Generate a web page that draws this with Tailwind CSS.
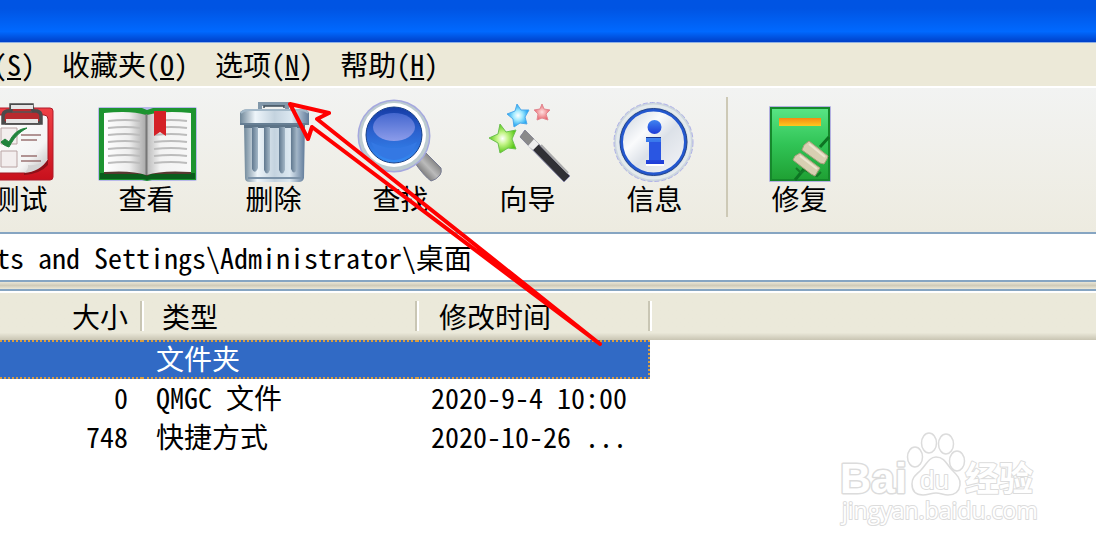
<!DOCTYPE html>
<html lang="zh-CN">
<head>
  <meta charset="UTF-8" />
  <meta name="viewport" content="width=device-width, initial-scale=1.0" />
  <title>WinRAR</title>
  <script src="https://cdn.jsdelivr.net/npm/@tailwindcss/browser@4"></script>
</head>
<body class="relative min-h-screen overflow-hidden bg-white text-black text-[28px] leading-7 font-['Noto_Sans_CJK_SC',sans-serif] [font-feature-settings:'hwid']">

  <!-- Title bar -->
  <header class="h-[43px] border-b border-[#8fb0e4] bg-linear-to-b from-[#0054e3] from-20% via-[#0069ff] via-75% to-[#0040c8]"></header>

  <!-- Menu -->
  <nav class="-ml-[7px] flex h-[43px] items-center gap-[27px] bg-[#ece9d8] pb-0.5 whitespace-nowrap">
    <button type="button">(<u class="underline-offset-2">S</u>)</button>
    <button type="button">收藏夹(<u class="underline-offset-2">O</u>)</button>
    <button type="button">选项(<u class="underline-offset-2">N</u>)</button>
    <button type="button">帮助(<u class="underline-offset-2">H</u>)</button>
  </nav>

  <!-- Toolbar -->
  <div class="flex h-[146px] items-start border-t-2 border-white bg-linear-to-b from-[#f2f3f2] to-[#edebe0] pt-2">
    <button type="button" class="-ml-[44px] flex w-[127px] shrink-0 flex-col items-center">
      <svg class="h-[88px] w-full" viewBox="-44 96 127 88" fill="none">
        <defs>
          <linearGradient id="red" x1="0" y1="0" x2="0" y2="1"><stop stop-color="#f04045"/><stop offset="1" stop-color="#c8101c"/></linearGradient>
          <linearGradient id="paper" x1="0" y1="0" x2="1" y2="1"><stop stop-color="#fff"/><stop offset=".7" stop-color="#f4f4f4"/><stop offset="1" stop-color="#bbb"/></linearGradient>
        </defs>
        <rect x="-13" y="108" width="66" height="72" rx="3" fill="url(#red)" stroke="#b01a2a"/>
        <path d="M-6 115h50q4 0 4 4v41q-9 12-24 13H-6z" fill="url(#paper)" stroke="#a31722"/>
        <path d="M24 173q16-2 24-13v5q-8 9-24 10z" fill="#8d1118"/>
        <path d="M24 173q5-4 4-8 12 1 20-6-8 13-24 14z" fill="#d4d4d4"/>
        <path d="M1 128h16v16H1zM1 151h16v16H1z" fill="#f3eeee" stroke="#b9a3a3"/>
        <path d="M21 135h20M21 140h16M21 161h20M21 156h16" stroke="#9a7373" stroke-width="1.5"/>
        <path d="M1 142l4-3 4 3c4-8 9-13 18-14-9 5-13 10-18 19-3-1-6-2-8-5z" fill="#21843d" stroke="#21843d"/>
        <path d="M8 109h27l5 7v7H3v-7z" fill="#b82a2e"/>
        <path d="M11 106v-1h21v1l1 5h4q4 1 4 5v7H3v-7q0-4 4-5h4z" stroke="#4b4b4b" stroke-width="3.5"/>
        <path d="M6 121h32M11 107h22" stroke="#e6e6e6" stroke-width="4"/>
        <path d="M5 124h35M12 112h20" stroke="#555" stroke-width="1.5"/>
      </svg>
      测试
    </button>
    <button type="button" class="flex w-[127px] shrink-0 flex-col items-center">
      <svg class="h-[88px] w-full" viewBox="83 96 127 88" fill="none">
        <defs>
          <linearGradient id="pageL"><stop stop-color="#fff"/><stop offset=".6" stop-color="#eee"/><stop offset="1" stop-color="#aaa"/></linearGradient>
          <linearGradient id="pageR"><stop stop-color="#bbb"/><stop offset=".3" stop-color="#f3f3f3"/><stop offset="1" stop-color="#f8f8f8"/></linearGradient>
        </defs>
        <rect x="98" y="107" width="99" height="74" rx="2" fill="#b9b9ea"/>
        <path d="M99 108h43l5 2 6-2h43v72h-44l-5 1-5-1H99z" fill="#1d9430"/>
        <path d="M100 173h95v6h-44l-4 1-4-1h-43z" fill="#0b5d1c"/>
        <path d="M104 171h87v3h-40l-4 2-4-2h-39z" fill="#56382f"/>
        <path d="M104 113q27-3 42 2v60q-14-5-42-3z" fill="url(#pageL)"/>
        <path d="M191 113q-27-3-44 2v60q14-5 44-3z" fill="url(#pageR)"/>
        <path d="M108 121q18-2 32 0M108 128q18-2 32 0M108 135q18-2 32 0M108 142q18-2 32 0M108 149q18-2 32 0M108 156q18-2 32 0M108 163q18-2 32 0M154 121q18-2 33 0M154 128q18-2 33 0M154 135q18-2 33 0M154 142q18-2 33 0M154 149q18-2 33 0M154 156q18-2 33 0M154 163q18-2 33 0" stroke="#bcbcbc" stroke-width="2"/>
        <path d="M146.500 114v61" stroke="#777" stroke-width="2"/>
        <path d="M154 111h12v25l-6-4-6 4z" fill="#d42127"/>
      </svg>
      查看
    </button>
    <button type="button" class="flex w-[127px] shrink-0 flex-col items-center">
      <svg class="h-[88px] w-full" viewBox="210 96 127 88" fill="none">
        <defs>
          <linearGradient id="steel"><stop stop-color="#6f8799"/><stop offset=".22" stop-color="#eef5fa"/><stop offset=".5" stop-color="#c4d3df"/><stop offset=".75" stop-color="#dce8f1"/><stop offset="1" stop-color="#5f7a99"/></linearGradient>
          <linearGradient id="slot"><stop stop-color="#60788f"/><stop offset="1" stop-color="#a5b8c8"/></linearGradient>
        </defs>
        <path d="M260 110v-6h27v6" stroke="#8298aa" stroke-width="4"/>
        <path d="M264 108v-2h20v2" stroke="#3d4c59" stroke-width="1.5"/>
        <path d="M244 123h61l-1 55q-1 4-5 4h-49q-5 0-5-4z" fill="url(#steel)"/>
        <path d="M244 124h61v4h-61z" fill="#5d7488"/>
        <g fill="url(#slot)">
          <path d="M252 127h6v41q-3 7-6 1z"/><path d="M264 127h6v43q-3 7-6 0z"/><path d="M279 127h6v43q-3 7-6 0z"/><path d="M291 127h6v42q-3 7-6 0z"/>
        </g>
        <path d="M248 178h53" stroke="#7c93a9" stroke-width="2"/>
        <path d="M240 113q2-4 8-4h53q7 0 8 4v12h-69z" fill="url(#steel)"/>
        <path d="M241 113q3-3 9-3h50q6 0 8 3" stroke="#a4b9c9" stroke-width="2"/>
        <path d="M240 124h69" stroke="#667e93" stroke-width="2"/>
      </svg>
      删除
    </button>
    <button type="button" class="flex w-[127px] shrink-0 flex-col items-center">
      <svg class="h-[88px] w-full" viewBox="337 96 127 88" fill="none">
        <defs>
          <linearGradient id="lens" x1="0" y1="0" x2="0" y2="1"><stop stop-color="#153ba5"/><stop offset=".45" stop-color="#2b62cf"/><stop offset="1" stop-color="#348bf3"/></linearGradient>
          <linearGradient id="gloss" x1="0" y1="0" x2="0" y2="1"><stop stop-color="#4467cf"/><stop offset="1" stop-color="#8c9cea"/></linearGradient>
          <linearGradient id="handle" x1="0" y1="1" x2="1" y2="0"><stop stop-color="#333"/><stop offset=".5" stop-color="#bbb"/><stop offset="1" stop-color="#444"/></linearGradient>
        </defs>
        <path d="M415 163l11-10 15 15q1 4-1 7-4 5-9 6-7-5-16-18z" fill="url(#handle)" stroke="#777b91"/>
        <circle cx="394" cy="136" r="36.500" fill="#a5a8df"/>
        <circle cx="394" cy="136" r="35" fill="#bccbd0"/>
        <circle cx="394" cy="135" r="32" fill="#fff"/>
        <circle cx="394" cy="135" r="28" fill="url(#lens)" stroke="#174088"/>
        <ellipse cx="394" cy="127" rx="21" ry="14" fill="url(#gloss)"/>
        <path d="M371 142q23 12 46 0-6 17-23 18-17-1-23-18z" fill="#3478e3"/>
      </svg>
      查找
    </button>
    <button type="button" class="flex w-[127px] shrink-0 flex-col items-center">
      <svg class="h-[88px] w-full" viewBox="464 96 127 88" fill="none">
        <defs>
          <radialGradient id="green"><stop stop-color="#fff"/><stop offset=".4" stop-color="#c5f58a"/><stop offset="1" stop-color="#58c814"/></radialGradient>
          <radialGradient id="cyan"><stop stop-color="#fff"/><stop offset=".4" stop-color="#a5ebff"/><stop offset="1" stop-color="#149ff0"/></radialGradient>
          <radialGradient id="pink"><stop stop-color="#ffe0e0"/><stop offset="1" stop-color="#e8686e"/></radialGradient>
        </defs>
        <path d="M500 124l6 8 10-2-4 9 4 10-8-1-8 5-2-10-9-5 9-4z" fill="url(#green)" stroke="#6cc04f"/>
        <path d="M517 104l4 6 8 0-4 7 2 7-7-1-6 4-1-8-6-5 8-3z" fill="url(#cyan)" stroke="#4fa9ea"/>
        <path d="M542 104l2 5 6 1-4 4 2 6-6-2-5 2 1-6-4-4 6-1z" fill="url(#pink)" stroke="#e28790"/>
        <path d="M525 130l45 46-6 6-44-45z" fill="#303035" stroke="#8989a8"/>
        <path d="M525 130l14 14-6 6-13-13z" fill="#8a8a8a"/>
        <path d="M534 139l5 5-6 6-5-4z" fill="#eee"/>
        <path d="M541 145l27 28" stroke="#aaa" stroke-width="2"/>
      </svg>
      向导
    </button>
    <button type="button" class="flex w-[127px] shrink-0 flex-col items-center">
      <svg class="h-[88px] w-full" viewBox="591 96 127 88" fill="none">
        <defs>
          <linearGradient id="disc" x1="0" y1="0" x2="1" y2="1"><stop stop-color="#c9d1db"/><stop offset=".35" stop-color="#fafbfc"/><stop offset=".55" stop-color="#dce1e8"/><stop offset="1" stop-color="#f5f6f8"/></linearGradient>
          <linearGradient id="info" x1="0" y1="0" x2="0" y2="1"><stop stop-color="#3f84f0"/><stop offset="1" stop-color="#1f3cd8"/></linearGradient>
        </defs>
        <circle cx="653.500" cy="142" r="39.500" fill="#cdd7de" stroke="#aeb0e8" stroke-dasharray="5 2"/>
        <circle cx="653.500" cy="142" r="36" stroke="#e4eaed" stroke-width="3"/>
        <circle cx="653.500" cy="142" r="32" fill="url(#disc)" stroke="#2458cf" stroke-width="3"/>
        <circle cx="653.500" cy="142" r="33.500" stroke="#24448a"/>
        <circle cx="654.500" cy="127" r="7" fill="url(#info)"/>
        <path d="M646 137h15v23h3v4h-18v-4h3v-18h-3z" fill="url(#info)"/>
        <path d="M649 142h12v18h-12z" fill="#2a56e2"/>
        <path d="M646 137.500h15" stroke="#1b3590"/>
        <path d="M646 165h18" stroke="#fff" stroke-width="2"/>
      </svg>
      信息
    </button>
    <div class="mx-2 mt-px h-[120px] w-[2px] shrink-0 bg-[#cdc9b6]"></div>
    <button type="button" class="flex w-[127px] shrink-0 flex-col items-center">
      <svg class="h-[88px] w-full" viewBox="736 96 127 88" fill="none">
        <defs>
          <linearGradient id="cover" x1="0" y1="0" x2="0" y2="1"><stop stop-color="#59e584"/><stop offset=".5" stop-color="#31c456"/><stop offset="1" stop-color="#1fa033"/></linearGradient>
          <linearGradient id="orange" x1="0" y1="0" x2="0" y2="1"><stop stop-color="#f58a10"/><stop offset="1" stop-color="#ffc81e"/></linearGradient>
        </defs>
        <rect x="769" y="106" width="62" height="76" rx="1" fill="#b3b0e0"/>
        <rect x="771" y="108" width="58" height="72" fill="url(#cover)" stroke="#15882b" stroke-width="2"/>
        <rect x="779" y="118" width="42" height="8" fill="url(#orange)"/>
        <path d="M829 137l-9 10M804 169l-9 11" stroke="#0d7423" stroke-width="3"/>
        <path d="M796 168l5 5 4-3 12 6 4-4" stroke="#157a28" stroke-width="2"/>
        <path d="M809 141l19 15-1 3-3 5-4-1-18-13 2-5z" fill="#d8cfb2" stroke="#a89f7a"/>
        <path d="M800 153l20 15-2 3-3 5-4-2-18-14 2-4z" fill="#d8cfb2" stroke="#a89f7a"/>
        <path d="M809 144l16 13M800 156l17 13" stroke="#ece5cf" stroke-width="2"/>
      </svg>
      修复
    </button>
  </div>

  <!-- Address bar -->
  <div class="h-[50px] border-y-2 border-[#86a5c2] bg-white">
    <label class="sr-only" for="path">地址</label>
    <input id="path" type="text" value="ts and Settings\Administrator\桌面"
           class="-ml-1 block h-full w-full pb-px [font-feature-settings:'hwid'] focus:outline-none">
  </div>
  <div class="h-[7px] bg-linear-to-b from-[#e9e6d6] via-[#cfcbb9] to-[#ece9d8]"></div>

  <!-- File list -->
  <main class="border-t-2 border-[#86a5c2]">
    <table class="w-full table-fixed border-separate border-spacing-0 text-left whitespace-nowrap">
      <colgroup>
        <col class="w-[142px]"><col class="w-[275px]"><col class="w-[233px]"><col>
      </colgroup>
      <thead class="bg-linear-to-b from-[#ebe9da] from-85% to-[#c9c5b3]">
        <tr class="h-[49px]">
          <th class="border-t-2 border-white p-0 pb-0.5 font-normal"><div class="flex h-[30px] items-center justify-end border-r-2 border-[#c9c6b4] pr-3 shadow-[2px_0_0_#fff]">大小</div></th>
          <th class="border-t-2 border-white p-0 pb-0.5 font-normal"><div class="flex h-[30px] items-center border-r-2 border-[#c9c6b4] pl-5 shadow-[2px_0_0_#fff]">类型</div></th>
          <th class="border-t-2 border-white p-0 pb-0.5 font-normal"><div class="flex h-[30px] items-center border-r-2 border-[#c9c6b4] pl-[22px] shadow-[2px_0_0_#fff]">修改时间</div></th>
          <td class="border-t-2 border-white p-0"></td>
        </tr>
      </thead>
      <tbody>
        <tr class="h-[39px] text-white">
          <td class="border-y-2 border-dotted border-[#d99d3f] bg-[#316ac5] p-0"></td>
          <td class="border-y-2 border-dotted border-[#d99d3f] bg-[#316ac5] pt-0 pb-1 pl-[14px]">文件夹</td>
          <td class="border-y-2 border-r-2 border-dotted border-[#d99d3f] bg-[#316ac5] p-0"></td>
        </tr>
        <tr class="h-[39px]">
          <td class="pt-0 pr-[14px] pb-1 text-right">0</td>
          <td class="pt-0 pb-1 pl-[14px]">QMGC 文件</td>
          <td class="pt-0 pb-1 pl-[14px]">2020-9-4 10:00</td>
        </tr>
        <tr class="h-[39px]">
          <td class="pt-0 pr-[14px] pb-1 text-right">748</td>
          <td class="pt-0 pb-1 pl-[14px]">快捷方式</td>
          <td class="pt-0 pb-1 pl-[14px]">2020-10-26 ...</td>
        </tr>
      </tbody>
    </table>
  </main>

  <!-- Pointer arrow -->
  <svg class="pointer-events-none absolute top-[100px] left-[286px] h-[250px] w-[320px]" viewBox="286 100 320 250" fill="none">
    <path d="M600 344L317 119l12-6-39-9 18 35 4-12z" stroke="#f00" stroke-width="4" stroke-linejoin="round"/>
  </svg>

  <!-- Watermark -->
  <svg class="pointer-events-none absolute top-[428px] left-[836px] h-[100px] w-[206px]" viewBox="836 428 206 100" fill="#fff" stroke="#dcdcdc" stroke-width="2" stroke-linejoin="round">
    <g stroke-width="1.5">
      <ellipse cx="915" cy="457" rx="7.500" ry="10"/>
      <ellipse cx="929" cy="443" rx="7.500" ry="10"/>
      <ellipse cx="946" cy="444" rx="7.500" ry="10"/>
      <ellipse cx="957" cy="461" rx="7.500" ry="10"/>
      <path d="M936 457c9 0 11 8 16 13s9 9 8 15c-1 8-6 10-12 10-5 0-7-2-12-2s-8 2-13 2c-7 0-11-4-11-11s4-9 9-14 8-13 15-13z"/>
    </g>
    <g style="paint-order: stroke">
      <text x="840" y="493" font-family="Liberation Sans" font-weight="700" font-size="43" stroke-width="3">Bai</text>
      <text x="920" y="489" font-family="Liberation Sans" font-size="26">du</text>
      <text x="965" y="491" font-family="Noto Sans CJK SC" font-weight="700" font-size="34">经验</text>
      <text x="842" y="519" font-family="Open Sans" font-size="23">jingyan.baidu.com</text>
    </g>
  </svg>
</body>
</html>
